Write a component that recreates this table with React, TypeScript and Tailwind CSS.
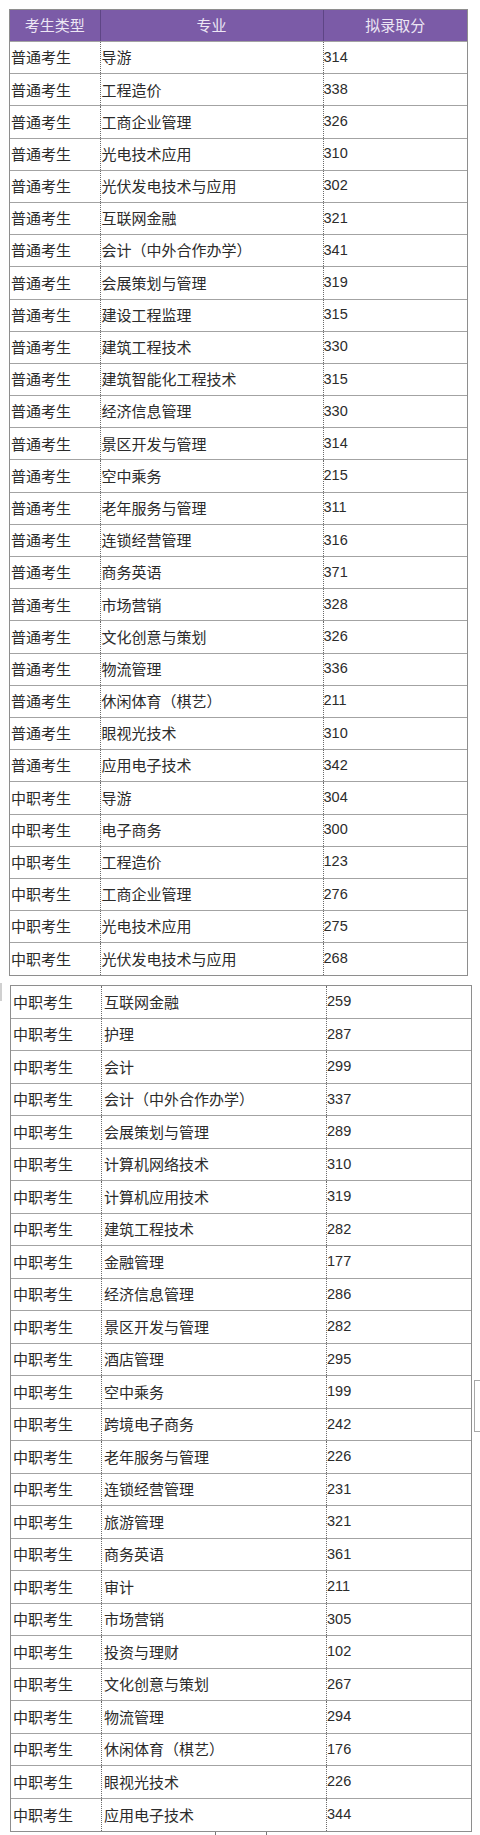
import React from 'react';

const cjk = "font-['Noto_Sans_CJK_SC','Noto_Sans',sans-serif]";
const num = "font-['Liberation_Sans','Arial',sans-serif]";

const t1: [string, string, string][] = [
  ['普通考生', '导游', '314'],
  ['普通考生', '工程造价', '338'],
  ['普通考生', '工商企业管理', '326'],
  ['普通考生', '光电技术应用', '310'],
  ['普通考生', '光伏发电技术与应用', '302'],
  ['普通考生', '互联网金融', '321'],
  ['普通考生', '会计（中外合作办学）', '341'],
  ['普通考生', '会展策划与管理', '319'],
  ['普通考生', '建设工程监理', '315'],
  ['普通考生', '建筑工程技术', '330'],
  ['普通考生', '建筑智能化工程技术', '315'],
  ['普通考生', '经济信息管理', '330'],
  ['普通考生', '景区开发与管理', '314'],
  ['普通考生', '空中乘务', '215'],
  ['普通考生', '老年服务与管理', '311'],
  ['普通考生', '连锁经营管理', '316'],
  ['普通考生', '商务英语', '371'],
  ['普通考生', '市场营销', '328'],
  ['普通考生', '文化创意与策划', '326'],
  ['普通考生', '物流管理', '336'],
  ['普通考生', '休闲体育（棋艺）', '211'],
  ['普通考生', '眼视光技术', '310'],
  ['普通考生', '应用电子技术', '342'],
  ['中职考生', '导游', '304'],
  ['中职考生', '电子商务', '300'],
  ['中职考生', '工程造价', '123'],
  ['中职考生', '工商企业管理', '276'],
  ['中职考生', '光电技术应用', '275'],
  ['中职考生', '光伏发电技术与应用', '268'],
];

const t2: [string, string, string][] = [
  ['中职考生', '互联网金融', '259'],
  ['中职考生', '护理', '287'],
  ['中职考生', '会计', '299'],
  ['中职考生', '会计（中外合作办学）', '337'],
  ['中职考生', '会展策划与管理', '289'],
  ['中职考生', '计算机网络技术', '310'],
  ['中职考生', '计算机应用技术', '319'],
  ['中职考生', '建筑工程技术', '282'],
  ['中职考生', '金融管理', '177'],
  ['中职考生', '经济信息管理', '286'],
  ['中职考生', '景区开发与管理', '282'],
  ['中职考生', '酒店管理', '295'],
  ['中职考生', '空中乘务', '199'],
  ['中职考生', '跨境电子商务', '242'],
  ['中职考生', '老年服务与管理', '226'],
  ['中职考生', '连锁经营管理', '231'],
  ['中职考生', '旅游管理', '321'],
  ['中职考生', '商务英语', '361'],
  ['中职考生', '审计', '211'],
  ['中职考生', '市场营销', '305'],
  ['中职考生', '投资与理财', '102'],
  ['中职考生', '文化创意与策划', '267'],
  ['中职考生', '物流管理', '294'],
  ['中职考生', '休闲体育（棋艺）', '176'],
  ['中职考生', '眼视光技术', '226'],
  ['中职考生', '应用电子技术', '344'],
];

function Row({ r, last, second }: { r: [string, string, string]; last: boolean; second?: boolean }) {
  return (
    <div
      className={`flex text-[15px] text-[#2b2b2b] ${second ? 'h-[32.5px]' : 'h-[32.2px]'} ${
        last ? '' : 'border-b border-[#a3a3a3]'
      }`}
    >
      <div className={`${second ? 'w-[90px] pl-[2px]' : 'w-[89.5px] pl-[1px]'} flex items-center ${cjk}`}>{r[0]}</div>
      <div
        className={`${second ? 'w-[225px] pl-[2px]' : 'w-[223px] pl-[1px]'} flex items-center border-l border-dotted border-[#6b6b6b] ${cjk}`}
      >
        {r[1]}
      </div>
      <div className={`flex-1 flex items-center border-l border-dotted border-[#6b6b6b] text-[14.5px] ${num}`}>{r[2]}</div>
    </div>
  );
}

export default function App() {
  return (
    <div className="relative w-[480px] h-[1835px] bg-white overflow-hidden">
      <div className="pt-[9px] pl-[9px]">
        <div className="w-[459px] border border-[#8e8e8e]">
          <div className={`flex h-[31px] bg-[#7b5ba7] text-[#ece6f4] text-[15px] ${cjk}`}>
            <div className="w-[89.5px] flex items-center justify-center">考生类型</div>
            <div className="w-[223px] flex items-center justify-center border-l border-[#5e4585]">专业</div>
            <div className="flex-1 flex items-center justify-center border-l border-[#5e4585]">拟录取分</div>
          </div>
          <div className="border-t border-[#a3a3a3]">
            {t1.map((r, i) => (
              <Row key={i} r={r} last={i === t1.length - 1} />
            ))}
          </div>
        </div>
      </div>

      <div className="pt-[9px] pl-[10px]">
        <div className="w-[462px] border border-[#8e8e8e]">
          {t2.map((r, i) => (
            <Row key={i} r={r} last={i === t2.length - 1} second />
          ))}
        </div>
      </div>

      {/* scan artifacts round the second table */}
      <div className="absolute left-0 top-[983px] w-[2px] h-[18px] bg-[#d0d0d0]" />
      <div className="absolute left-[474px] top-[1380px] w-[6px] h-[52px] border-l border-t border-b border-[#a8a8a8]" />
      <div className="absolute left-[215px] top-[1832px] w-px h-[3px] bg-[#777]" />
      <div className="absolute left-[266px] top-[1832px] w-px h-[3px] bg-[#777]" />
    </div>
  );
}
